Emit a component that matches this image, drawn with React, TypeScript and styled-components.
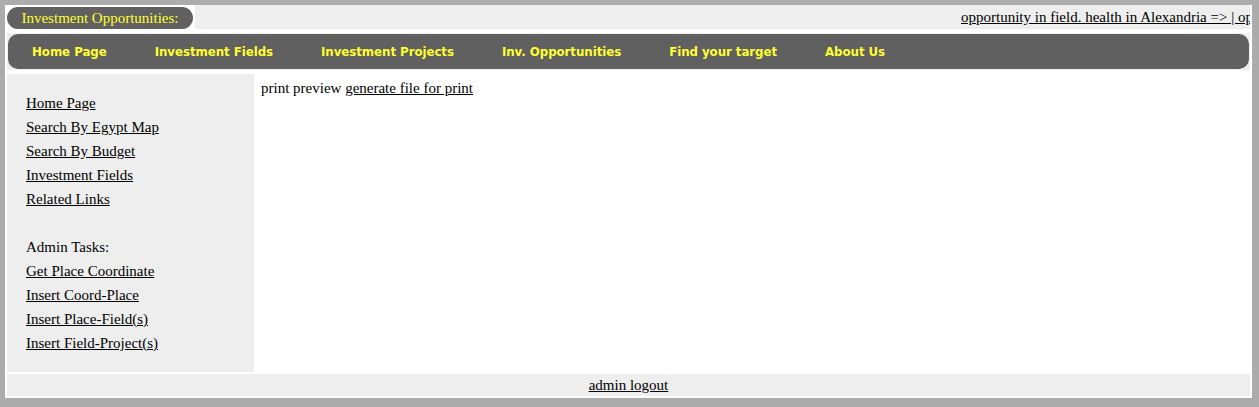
import React from 'react';
import styled, { createGlobalStyle } from 'styled-components';

const GlobalStyle = createGlobalStyle`
  html, body {
    margin: 0;
    padding: 0;
    background: #acacac;
    font-family: "Liberation Serif", "Times New Roman", serif;
    font-size: 15px;
    color: #000;
  }
`;

const Page = styled.div`
  padding: 5px 7px 9px 5px;
`;

const Frame = styled.div`
  background: #fff;
  width: 1243px;
  padding: 0 2px 2px 2px;
`;

const Header = styled.div`
  display: flex;
  height: 24px;
  gap: 2px;
`;

const Pill = styled.div`
  margin-top: 2px;
  width: 186px;
  height: 22px;
  border-radius: 11px;
  background: #606060;
  color: #ffff33;
  font-size: 15px;
  line-height: 22px;
  text-align: center;
  white-space: nowrap;
`;

const Marquee = styled.div`
  flex: 1;
  background: #eeeeee;
  overflow: hidden;
  white-space: nowrap;
  line-height: 24px;
  padding-left: 766px;
`;

const TextLink = styled.a`
  color: #000;
  text-decoration: underline;
`;

const NavRow = styled.div`
  margin-top: 4px;
  background: #eeeeee;
  padding: 1px;
`;

const NavBar = styled.nav`
  display: flex;
  align-items: center;
  height: 35px;
  border-radius: 10px;
  background: #606060;
`;

const NavItem = styled.a`
  padding: 0 24px;
  color: #ffff33;
  font-family: "DejaVu Sans", Verdana, sans-serif;
  font-weight: bold;
  font-size: 11.8px;
  letter-spacing: -0.05px;
  text-decoration: none;
  white-space: nowrap;
`;

const Body = styled.div`
  display: flex;
  margin-top: 4px;
`;

const Sidebar = styled.aside`
  width: 228px;
  padding: 17px 0 17px 19px;
  background: #eeeeee;
  line-height: 24px;
`;

const SideLink = styled(TextLink)`
  display: block;
`;

const SideLabel = styled.div<{ $spaced?: boolean }>`
  margin-top: ${(p) => (p.$spaced ? '24px' : '0')};
`;

const Content = styled.main`
  flex: 1;
  padding: 6px 7px;
  line-height: 17px;
`;

const Footer = styled.footer`
  margin-top: 2px;
  height: 22px;
  line-height: 22px;
  background: #eeeeee;
  text-align: center;
`;

const navItems = [
  'Home Page',
  'Investment Fields',
  'Investment Projects',
  'Inv. Opportunities',
  'Find your target',
  'About Us',
];

const sideLinks = [
  'Home Page',
  'Search By Egypt Map',
  'Search By Budget',
  'Investment Fields',
  'Related Links',
];

const adminLinks = [
  'Get Place Coordinate',
  'Insert Coord-Place',
  'Insert Place-Field(s)',
  'Insert Field-Project(s)',
];

export default function App() {
  return (
    <>
      <GlobalStyle />
      <Page>
        <Frame>
          <Header>
            <Pill>Investment Opportunities:</Pill>
            <Marquee>
              <TextLink href="#">
                opportunity in field. health in Alexandria =&gt; | opportunity in field. health in Alexandria =&gt;
              </TextLink>
            </Marquee>
          </Header>
          <NavRow>
            <NavBar>
              {navItems.map((item) => (
                <NavItem key={item} href="#">
                  {item}
                </NavItem>
              ))}
            </NavBar>
          </NavRow>
          <Body>
            <Sidebar>
              {sideLinks.map((l) => (
                <SideLink key={l} href="#">
                  {l}
                </SideLink>
              ))}
              <SideLabel $spaced>Admin Tasks:</SideLabel>
              {adminLinks.map((l) => (
                <SideLink key={l} href="#">
                  {l}
                </SideLink>
              ))}
            </Sidebar>
            <Content>
              print preview <TextLink href="#">generate file for print</TextLink>
            </Content>
          </Body>
          <Footer>
            <TextLink href="#">admin logout</TextLink>
          </Footer>
        </Frame>
      </Page>
    </>
  );
}
